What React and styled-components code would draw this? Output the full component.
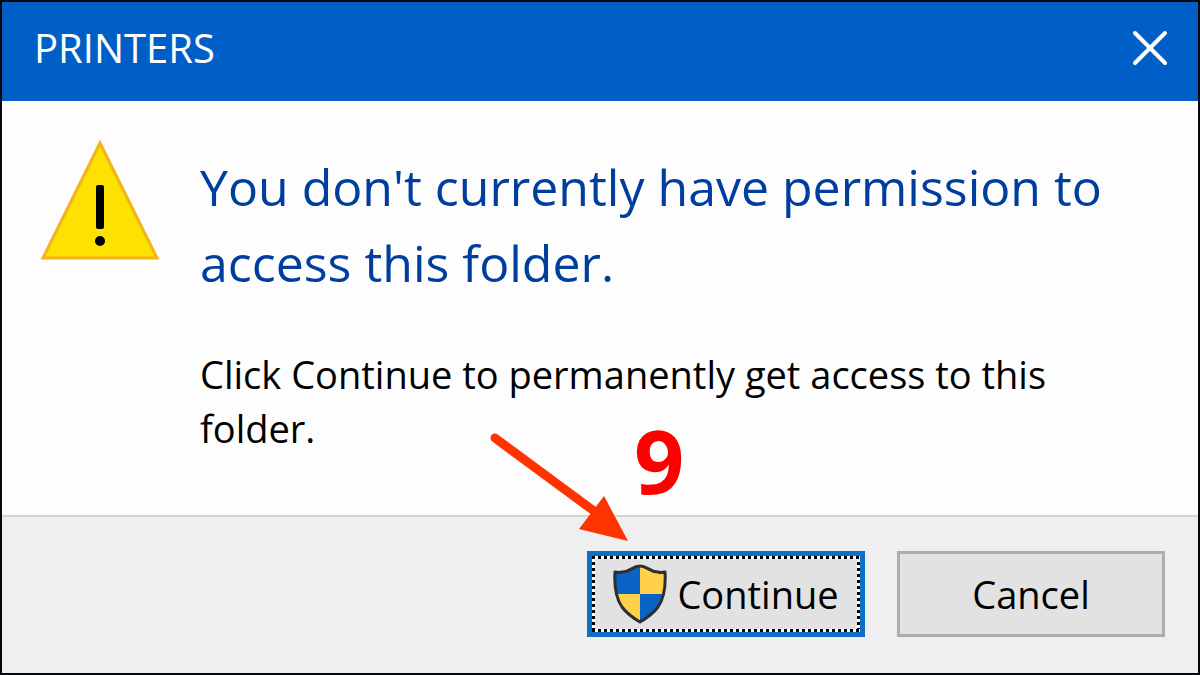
import React from "react";
import styled, { createGlobalStyle } from "styled-components";

const GlobalStyle = createGlobalStyle`
  *, *::before, *::after { box-sizing: border-box; }
  body { margin: 0; background: #fdfdfd; }
  body, button { font-family: "Open Sans", "Noto Sans", sans-serif; }
`;

const Dialog = styled.div`
  display: flex;
  flex-direction: column;
  min-height: 100vh;
  border: 2px solid #05070f;
  background: #fdfdfd;
`;

const TitleBar = styled.header`
  display: flex;
  align-items: center;
  justify-content: space-between;
  padding: 18px 28px 26px 32px;
  background: #005fc6;
  color: #fff;
`;

const Title = styled.h1`
  margin: 0;
  font-size: 40px;
  line-height: 55px;
  font-weight: 400;
`;

const CloseButton = styled.button`
  display: flex;
  padding: 0;
  border: 0;
  background: none;
  color: inherit;
`;

const Message = styled.main`
  display: flex;
  flex: 1;
  align-items: flex-start;
  gap: 40px;
  padding: 38px 60px 56px 38px;
`;

const WarningSign = styled.svg`
  flex: none;
  width: 120px;
  height: 124px;
`;

const Copy = styled.div`
  flex: 1;
`;

const Heading = styled.h2`
  margin: 10px 0 46px;
  font-size: 50px;
  line-height: 76px;
  font-weight: 400;
  color: #003e9e;
`;

const Text = styled.p`
  margin: 0;
  font-size: 38px;
  line-height: 54px;
  color: #000;
`;

const Actions = styled.footer`
  display: flex;
  flex-wrap: wrap;
  justify-content: flex-end;
  gap: 32px;
  padding: 34px 33px 36px;
  border-top: 2px solid #d4d4d4;
  background: #efefef;
`;

const ActionSlot = styled.div`
  position: relative;
  display: flex;
`;

const Button = styled.button`
  position: relative;
  display: flex;
  align-items: center;
  justify-content: center;
  gap: 10px;
  min-width: ${({ $primary }) => ($primary ? 278 : 268)}px;
  height: 86px;
  padding: 0;
  border: ${({ $primary }) => ($primary ? "5px solid #0f6fc6" : "3px solid #adadad")};
  background: #e2e2e2;
  color: #000;
  font-size: 38px;
  line-height: 54px;
`;

const FocusRing = styled.span`
  position: absolute;
  inset: 0;
  background:
    repeating-linear-gradient(90deg, #000 0 3px, #fff 3px 6px) top / 100% 3px no-repeat,
    repeating-linear-gradient(90deg, #000 0 3px, #fff 3px 6px) bottom / 100% 3px no-repeat,
    repeating-linear-gradient(#000 0 3px, #fff 3px 6px) left / 3px 100% no-repeat,
    repeating-linear-gradient(#000 0 3px, #fff 3px 6px) right / 3px 100% no-repeat;
`;

const Arrow = styled.svg`
  position: absolute;
  left: -100px;
  bottom: 94px;
  width: 144px;
  height: 114px;
  pointer-events: none;
`;

const StepNumber = styled.span`
  position: absolute;
  left: 47px;
  bottom: 145px;
  font-size: 88px;
  line-height: 64px;
  font-weight: 700;
  color: #f00;
  pointer-events: none;
`;

const shieldOutline =
  "M27 2C19 2 18 8 9 8Q6 9 2 8C1 23 3 34 9 43Q15 51 27 58Q39 51 45 43C51 34 53 23 52 8Q48 9 45 8C36 8 35 2 27 2Z";

function Shield() {
  return (
    <svg width="54" height="60" viewBox="0 0 54 60" aria-hidden="true">
      <clipPath id="shield">
        <path d={shieldOutline} />
      </clipPath>
      <g clipPath="url(#shield)">
        <path fill="#0a62c4" d="M0 0H27V30H0ZM27 30H54V60H27Z" />
        <path fill="#ffd04a" d="M27 0H54V30H27ZM0 30H27V60H0Z" />
      </g>
      <path d={shieldOutline} fill="none" stroke="#2d2f33" strokeWidth="3" strokeLinejoin="round" />
    </svg>
  );
}

export default function App() {
  return (
    <>
      <GlobalStyle />
      <Dialog role="dialog" aria-labelledby="dialog-title">
        <TitleBar>
          <Title id="dialog-title">PRINTERS</Title>
          <CloseButton type="button" aria-label="Close">
            <svg width="40" height="40" viewBox="0 0 40 40" aria-hidden="true">
              <path d="M5 5L35 35M35 5L5 35" stroke="currentColor" strokeWidth="4" strokeLinecap="round" />
            </svg>
          </CloseButton>
        </TitleBar>
        <Message>
          <WarningSign viewBox="0 0 120 124" role="img" aria-label="Warning">
            <path d="M60 4L117 119H3Z" fill="#fde100" stroke="#f5b21a" strokeWidth="3" />
            <rect x="56" y="46" width="8" height="44" rx="2" fill="#000" />
            <ellipse cx="60" cy="102" rx="5" ry="5" fill="#000" />
          </WarningSign>
          <Copy>
            <Heading>You don't currently have permission to access this folder.</Heading>
            <Text>Click Continue to permanently get access to this folder.</Text>
          </Copy>
        </Message>
        <Actions>
          <ActionSlot>
            <Button type="button" $primary>
              <FocusRing />
              <Shield />
              Continue
            </Button>
            <Arrow viewBox="0 0 144 114" aria-hidden="true">
              <path d="M8 9L107 82" stroke="#ff3300" strokeWidth="9" strokeLinecap="round" />
              <path d="M117 67L141 112L92 100Z" fill="#ff3300" />
            </Arrow>
            <StepNumber>9</StepNumber>
          </ActionSlot>
          <Button type="button">Cancel</Button>
        </Actions>
      </Dialog>
    </>
  );
}
